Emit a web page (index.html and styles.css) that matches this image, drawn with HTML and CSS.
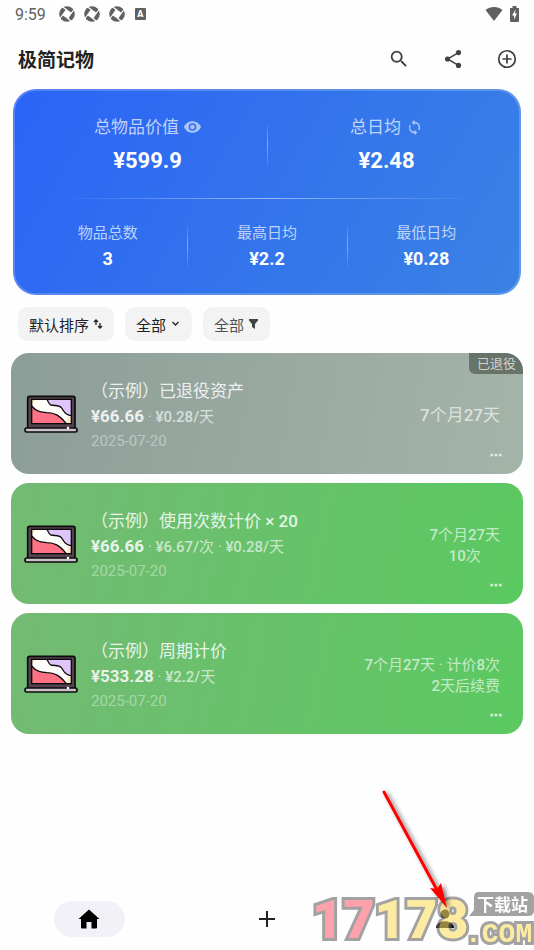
FILE: index.html
```html
<!DOCTYPE html>
<html lang="zh-CN">
<head>
    <meta charset="UTF-8">
    <meta name="viewport" content="width=device-width, initial-scale=1.0">
    <title>极简记物</title>
    <link rel="stylesheet" href="styles.css">
</head>
<body>
    <!-- 公用图标 -->
    <svg class="sprite" aria-hidden="true">
        <symbol id="aperture" viewBox="0 0 16 16">
            <circle cx="8" cy="8" r="7.800" fill="#606060"/>
            <path d="M7 3l6 4L9 13 3 9z" fill="#fefefe"/>
            <path d="M8 4L3.500 1M12 7.500L15.500 3M8.500 12L12.500 15.500M4 8.500L.5 13" stroke="#fefefe" stroke-width="1.200"/>
        </symbol>
        <symbol id="laptop" viewBox="0 0 162 114">
            <rect x="11" y="4" width="142" height="98" rx="6" fill="#54434f" stroke="#0d0a0c" stroke-width="5"/>
            <path d="M23 13h119v73H23z" fill="#fffefb"/>
            <path d="M23 13h14L23 28zM142 86h-14l2-22 12 4z" fill="#ffe9c0"/>
            <path d="M68 13c6 5 4 14 13 17 10 3 24-1 31 8 8 9 8 22 30 24V13z" fill="#dfc5fa"/>
            <path d="M23 33c14 18 30 19 46 20 24 0 38 9 58 33H23z" fill="#ff7185"/>
            <path d="M68 13c6 5 4 14 13 17 10 3 24-1 31 8 8 9 8 22 30 24M23 33c14 18 30 19 46 20 24 0 38 9 58 33" fill="none" stroke="#0d0a0c" stroke-width="4"/>
            <rect x="23" y="13" width="119" height="73" fill="none" stroke="#0d0a0c" stroke-width="4"/>
            <rect x="3" y="99" width="156" height="12" rx="5" fill="#c9c3c7" stroke="#0d0a0c" stroke-width="5"/>
            <circle cx="132" cy="99" r="4" fill="#fff"/>
        </symbol>
        <symbol id="dots" viewBox="0 0 12 4">
            <circle cx="1.700" cy="2" r="1.600"/><circle cx="6" cy="2" r="1.600"/><circle cx="10.300" cy="2" r="1.600"/>
        </symbol>
    </svg>

    <div class="status-bar">
        <span class="time">9:59</span>
        <svg class="icon-16"><use href="#aperture"/></svg>
        <svg class="icon-16"><use href="#aperture"/></svg>
        <svg class="icon-16"><use href="#aperture"/></svg>
        <span class="ime">A</span>
        <span class="status-right">
            <svg width="18" height="16" viewBox="0 0 18 16"><path d="M9 15L.5 4C5 0 13 0 17.500 4z" fill="#606060"/></svg>
            <svg width="9" height="16" viewBox="0 0 9 16"><path d="M2.500 0h4v2H9v13q0 1-1 1H1q-1 0-1-1V2h2.500z" fill="#606060"/><path d="M5.500 3.500L2 9.500h2v4l3-6H5z" fill="#fff"/></svg>
        </span>
    </div>

    <header class="app-bar">
        <h1>极简记物</h1>
        <div class="actions">
            <button type="button" aria-label="搜索">
                <svg width="22" height="22" viewBox="0 0 24 24"><path d="M15.500 14h-.79l-.28-.27A6.470 6.470 0 0 0 16 9.500 6.500 6.500 0 1 0 9.500 16c1.610 0 3.090-.59 4.230-1.570l.27.28v.79l5 4.990L20.490 19zm-6 0a4.500 4.500 0 1 1 0-9 4.500 4.500 0 0 1 0 9z"/></svg>
            </button>
            <button type="button" aria-label="分享">
                <svg width="22" height="22" viewBox="0 0 24 24"><path d="M18 5L6 12l12 7" fill="none" stroke="#404040" stroke-width="1.600"/><circle cx="18" cy="5" r="2.800"/><circle cx="6" cy="12" r="2.800"/><circle cx="18" cy="19" r="2.800"/></svg>
            </button>
            <button type="button" aria-label="添加">
                <svg width="22" height="22" viewBox="0 0 24 24" fill="none" stroke="#404040" stroke-width="1.900"><circle cx="12" cy="12" r="9"/><path d="M12 7v10M7 12h10"/></svg>
            </button>
        </div>
    </header>

    <main>
        <section class="summary">
            <div class="row row-main">
                <div class="stat">
                    <span class="label">总物品价值
                        <svg width="17" height="12" viewBox="0 0 22 15"><path fill-rule="evenodd" d="M11 0C6 0 1.700 3.100 0 7.500 1.700 11.900 6 15 11 15s9.300-3.100 11-7.500C20.300 3.100 16 0 11 0zm0 12.500a5 5 0 1 1 0-10 5 5 0 0 1 0 10z"/><circle cx="11" cy="7.500" r="3"/></svg>
                    </span>
                    <strong>¥599.9</strong>
                </div>
                <div class="stat">
                    <span class="label">总日均
                        <svg width="17" height="17" viewBox="0 0 24 24"><path d="M12 4V1L8 5l4 4V6a6 6 0 0 1 5.250 8.800l1.460 1.460A8 8 0 0 0 12 4zm0 14a6 6 0 0 1-5.250-8.800L5.290 7.740A8 8 0 0 0 12 20v3l4-4-4-4z"/></svg>
                    </span>
                    <strong>¥2.48</strong>
                </div>
            </div>
            <div class="row row-sub">
                <div class="stat"><span class="label">物品总数</span><strong>3</strong></div>
                <div class="stat"><span class="label">最高日均</span><strong>¥2.2</strong></div>
                <div class="stat"><span class="label">最低日均</span><strong>¥0.28</strong></div>
            </div>
        </section>

        <div class="filters">
            <button type="button">默认排序
                <svg width="10" height="12" viewBox="0 0 10 12" fill="none" stroke="#222" stroke-width="1.300"><path d="M3 7V2M1 4l2-2 2 2M7 5v5M5 8l2 2 2-2"/></svg>
            </button>
            <button type="button">全部
                <svg width="11" height="12" viewBox="0 0 10 12" fill="none" stroke="#222" stroke-width="1.300"><path d="M2 4l3 3 3-3"/></svg>
            </button>
            <button type="button" class="muted">全部
                <svg width="11" height="12" viewBox="0 0 11 12" fill="#444"><path d="M1 1h9v1.500L7 6v5L4 9V6L1 2.500z"/></svg>
            </button>
        </div>

        <div class="items">
            <article class="item retired">
                <svg class="thumb"><use href="#laptop"/></svg>
                <div class="info">
                    <h2>（示例）已退役资产</h2>
                    <p class="price"><b>¥66.66</b> · <span>¥0.28/</span>天</p>
                    <time>2025-07-20</time>
                </div>
                <div class="usage"><span>7</span>个月<span>27</span>天</div>
                <button type="button" class="more" aria-label="更多"><svg width="12" height="4"><use href="#dots"/></svg></button>
                <span class="badge">已退役</span>
            </article>

            <article class="item">
                <svg class="thumb"><use href="#laptop"/></svg>
                <div class="info">
                    <h2>（示例）使用次数计价 <span>× 20</span></h2>
                    <p class="price"><b>¥66.66</b> · <span>¥6.67/</span>次 · <span>¥0.28/</span>天</p>
                    <time>2025-07-20</time>
                </div>
                <div class="usage centered"><span>7</span>个月<span>27</span>天<br><span>10</span>次</div>
                <button type="button" class="more" aria-label="更多"><svg width="12" height="4"><use href="#dots"/></svg></button>
            </article>

            <article class="item">
                <svg class="thumb"><use href="#laptop"/></svg>
                <div class="info">
                    <h2>（示例）周期计价</h2>
                    <p class="price"><b>¥533.28</b> · <span>¥2.2/</span>天</p>
                    <time>2025-07-20</time>
                </div>
                <div class="usage"><span>7</span>个月<span>27</span>天 · 计价<span>8</span>次<br><span>2</span>天后续费</div>
                <button type="button" class="more" aria-label="更多"><svg width="12" height="4"><use href="#dots"/></svg></button>
            </article>
        </div>
    </main>

    <nav class="tab-bar">
        <a href="#home" class="active" aria-label="首页">
            <svg width="24" height="24" viewBox="0 0 24 24"><path d="M12 2.500L1.500 12H4v8.500q0 1 1 1h4.500V15h5v6.500H19q1 0 1-1V12h2.500z"/></svg>
        </a>
        <a href="#add" aria-label="新增">
            <svg width="24" height="24" viewBox="0 0 24 24"><path d="M12 4v16M4 12h16" stroke="#222" stroke-width="2"/></svg>
        </a>
        <a href="#me" aria-label="我的">
            <svg width="24" height="24" viewBox="0 0 24 24"><circle cx="12" cy="7" r="4.500"/><path d="M3 21c0-9 18-9 18 0z"/></svg>
        </a>
    </nav>

    <!-- 站点水印和指示箭头 -->
    <div class="overlay">
        <svg width="234" height="170" viewBox="0 0 234 170">
            <defs>
                <filter id="shadow" x="-50%" y="-20%" width="200%" height="150%">
                    <feDropShadow dx="3" dy="2" stdDeviation="2" flood-color="#000" flood-opacity=".5"/>
                </filter>
            </defs>
            <g class="mark">
                <text x="12" y="158" class="mark-num"><tspan class="pink">17</tspan>178</text>
                <text x="165" y="162" class="mark-com">.COM</text>
                <path d="M178 112h50q6 0 6 6v12q0 6-6 6h-59l5-6v-12q0-6 4-6z" fill="#666"/>
                <text x="177" y="131" class="mark-cn">下载站</text>
            </g>
            <g filter="url(#shadow)">
                <path d="M84 12L137 110" stroke="#f00" stroke-width="3" stroke-linecap="round"/>
                <path d="M147 128l-17-20 7 1 4-6z" fill="#f00"/>
            </g>
        </svg>
    </div>
</body>
</html>
```
FILE: styles.css
```css
* {
    box-sizing: border-box;
}
body {
    margin: 0;
    min-height: 100vh;
    display: flex;
    flex-direction: column;
    position: relative;
    background: #fefefe;
    font-family: Roboto, "Noto Sans CJK SC", sans-serif;
    color: #222;
}
h1, h2, p {
    margin: 0;
}
button {
    border: none;
    padding: 0;
    background: none;
    font-family: inherit;
    cursor: pointer;
}
svg {
    display: block;
    flex: none;
}
.sprite {
    position: absolute;
    width: 0;
    height: 0;
}

/* 状态栏 */
.status-bar {
    display: flex;
    align-items: center;
    gap: 9px;
    height: 28px;
    padding: 0 15px;
    font-size: 16px;
    color: #606060;
}
.time {
    margin-right: 4px;
}
.icon-16 {
    width: 16px;
    height: 16px;
}
.ime {
    width: 11px;
    margin-left: 1px;
    border-radius: 1px;
    background: #606060;
    color: #fff;
    font-size: 9px;
    font-weight: 900;
    line-height: 12px;
    text-align: center;
}
.status-right {
    display: flex;
    gap: 7px;
    margin-left: auto;
}

/* 标题栏 */
.app-bar {
    display: flex;
    align-items: center;
    justify-content: space-between;
    height: 61px;
    padding: 0 15px 0 18px;
}
.app-bar h1 {
    font-size: 19px;
    font-weight: 700;
}
.actions {
    display: flex;
    gap: 30px;
}
.actions button {
    width: 24px;
    height: 24px;
    display: grid;
    place-items: center;
    fill: #404040;
}

/* 统计卡片 */
.summary {
    margin: 0 13px;
    padding: 20px 13px;
    border: 2px solid rgba(255, 255, 255, 0.2);
    border-radius: 23px;
    background: linear-gradient(120deg, #2b64f6, #3a82e4) border-box;
    color: #fff;
}
.row {
    display: flex;
}
.stat {
    flex: 1;
    display: flex;
    flex-direction: column;
    align-items: center;
}
.stat + .stat {
    background: linear-gradient(transparent, rgba(255, 255, 255, 0.4), transparent) left center / 1px 48px no-repeat;
}
.label {
    display: flex;
    align-items: center;
    gap: 5px;
    color: rgba(255, 255, 255, 0.7);
    fill: rgba(255, 255, 255, 0.6);
}
.row-main {
    padding-bottom: 21px;
    background: linear-gradient(90deg, transparent, rgba(255, 255, 255, 0.5), transparent) center bottom / 88% 1px no-repeat;
}
.row-main .label {
    font-size: 17px;
    line-height: 32px;
}
.row-main strong {
    font-size: 22px;
    line-height: 35px;
}
.row-sub {
    padding: 21px 0 1px;
}
.row-sub .label {
    font-size: 15px;
    line-height: 26px;
}
.row-sub strong {
    font-size: 18px;
    line-height: 26px;
}

/* 筛选 */
.filters {
    display: flex;
    gap: 11px;
    padding: 12px 18px;
}
.filters button {
    display: flex;
    align-items: center;
    gap: 4px;
    height: 34px;
    padding: 0 11px;
    border-radius: 10px;
    background: #f3f3f3;
    font-size: 15px;
    color: #222;
}
.filters .muted {
    color: #505050;
}

/* 物品列表 */
.items {
    display: flex;
    flex-direction: column;
    gap: 9px;
    padding: 0 11px;
}
.item {
    position: relative;
    display: grid;
    grid-template-columns: 54px 1fr auto;
    column-gap: 13px;
    align-items: center;
    min-height: 121px;
    padding: 0 23px 0 13px;
    border-radius: 18px;
    overflow: hidden;
    background: linear-gradient(100deg, #74ba74, #5bc961);
    color: #fff;
}
.retired {
    background: linear-gradient(100deg, #8c9e98, #a5b4a9);
}
.item span {
    font-weight: 500;
}
.thumb {
    width: 54px;
    height: 38px;
}
.info {
    padding-top: 5px;
}
.info h2 {
    font-size: 17px;
    font-weight: 400;
    line-height: 25px;
    color: rgba(255, 255, 255, 0.85);
}
.price {
    font-size: 15px;
    line-height: 24px;
    color: rgba(255, 255, 255, 0.65);
}
.price b {
    font-size: 17px;
    font-weight: 700;
    color: rgba(255, 255, 255, 0.85);
}
.info time {
    display: block;
    font-size: 15px;
    line-height: 24px;
    color: rgba(255, 255, 255, 0.4);
}
.usage,
.more {
    grid-column: 3;
    grid-row: 1;
    justify-self: end;
}
.usage {
    padding-top: 4px;
    font-size: 15px;
    line-height: 21px;
    text-align: right;
    color: rgba(255, 255, 255, 0.65);
}
.retired .usage {
    font-size: 17px;
}
.usage.centered {
    text-align: center;
}
.more {
    align-self: end;
    margin: 0 -2px 17px 0;
    fill: rgba(255, 255, 255, 0.7);
}
.item .badge {
    position: absolute;
    top: 0;
    right: 0;
    padding: 0 7px 0 8px;
    border-bottom-left-radius: 6px;
    background: #68736a;
    font-size: 13px;
    font-weight: 400;
    line-height: 21px;
    color: rgba(255, 255, 255, 0.7);
}

/* 底部导航 */
.tab-bar {
    display: flex;
    margin-top: auto;
    padding-bottom: 13px;
}
.tab-bar a {
    flex: 1;
    display: grid;
    place-items: center;
    height: 36px;
}
.tab-bar .active::before {
    content: "";
    width: 71px;
    height: 36px;
    border-radius: 18px;
    background: #f2f1f7;
}
.tab-bar .active::before,
.tab-bar svg {
    grid-area: 1 / 1;
}

/* 水印 */
.overlay {
    position: absolute;
    right: 0;
    bottom: 0;
    pointer-events: none;
}
.mark {
    opacity: 0.6;
}
.mark text {
    font-weight: 700;
    fill: #ffe066;
    stroke: #666;
    stroke-width: 6px;
    stroke-linejoin: miter;
    paint-order: stroke;
}
.mark .pink {
    fill: #ff6474;
}
.mark .mark-num {
    font-family: Roboto, sans-serif;
    font-weight: 900;
    font-size: 54px;
}
.mark .mark-com {
    font-family: "Liberation Mono", monospace;
    font-size: 28px;
}
.mark .mark-cn {
    font-family: "Noto Sans CJK SC", sans-serif;
    font-size: 17px;
    fill: #fff;
    stroke: none;
}
```
